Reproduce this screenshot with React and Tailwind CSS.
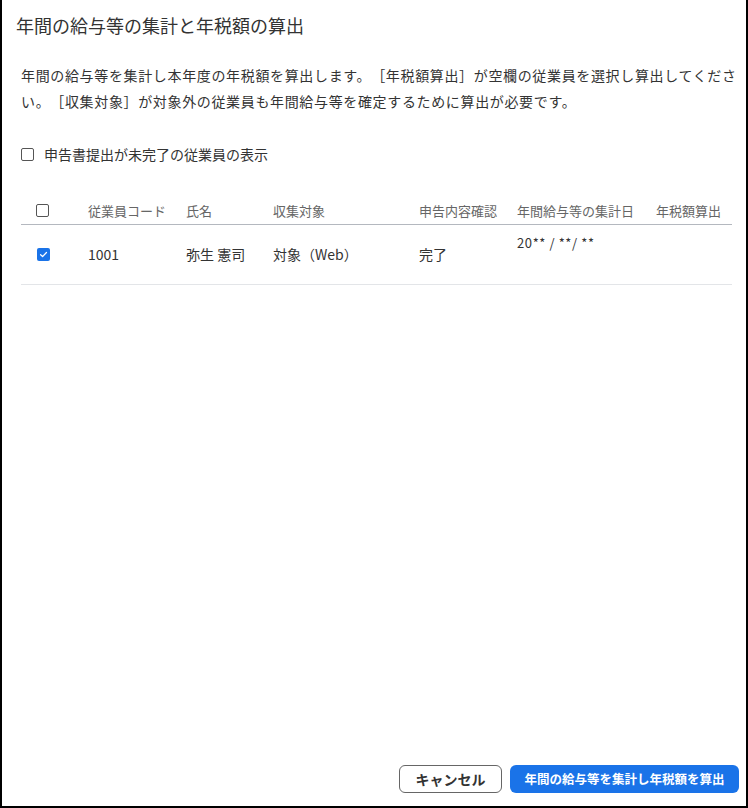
import React from "react";

const font = { fontFamily: '"Noto Sans CJK JP", "Noto Sans", sans-serif' };

function Box({ checked }) {
  if (checked) {
    return (
      <span className="flex h-[13px] w-[13px] items-center justify-center rounded-[2px] bg-[#1a73e8]">
        <svg width="9" height="9" viewBox="0 0 10 10" fill="none">
          <path d="M1.8 5.2 L4 7.3 L8.3 2.8" stroke="white" strokeWidth="1.4" strokeLinecap="round" strokeLinejoin="round" />
        </svg>
      </span>
    );
  }
  return <span className="block h-[13px] w-[13px] rounded-[2px] border border-[#555] bg-white" />;
}

export default function App() {
  return (
    <div
      className="flex h-[808px] w-[748px] flex-col border-x-2 border-b-2 border-black bg-white text-[#333] [text-spacing-trim:space-all]"
      style={font}
    >
      <div className="px-[14px] pt-[11px] text-[18px] leading-[28px]">年間の給与等の集計と年税額の算出</div>

      <p className="mt-[23px] pl-[19px] pr-[8px] text-[14px] leading-[26px] tracking-[0.65px]">
        年間の給与等を集計し本年度の年税額を算出します。［年税額算出］が空欄の従業員を選択し算出してくださ
        <br />
        い。［収集対象］が対象外の従業員も年間給与等を確定するために算出が必要です。
      </p>

      <label className="mt-[30px] flex h-[20px] items-center gap-[10px] pl-[19px] text-[14px]">
        <Box />
        <span>申告書提出が未完了の従業員の表示</span>
      </label>

      <div className="ml-[19px] mr-[14px] mt-[33px]">
        <div className="grid h-[28px] grid-cols-[67px_98px_87px_146px_98px_139px_1fr] items-center border-b border-[#b4b8bf] text-[13px] text-[#666]">
          <div className="pl-[15px]">
            <Box />
          </div>
          <div>従業員コード</div>
          <div>氏名</div>
          <div>収集対象</div>
          <div>申告内容確認</div>
          <div>年間給与等の集計日</div>
          <div>年税額算出</div>
        </div>
        <div className="grid h-[60px] grid-cols-[67px_98px_87px_146px_98px_139px_1fr] items-center border-b border-[#e3e5e8] text-[14px]">
          <div className="pl-[16px]">
            <Box checked />
          </div>
          <div>1001</div>
          <div>弥生 憲司</div>
          <div>対象（Web）</div>
          <div>完了</div>
          <div className="self-start pt-[10px] text-[13px] leading-[16px] tracking-[0.6px]">20** / **/ **</div>
          <div />
        </div>
      </div>

      <div className="mt-auto flex justify-end gap-[8px] pb-[13px] pr-[7px]">
        <button className="h-[28px] w-[103px] rounded-[6px] border border-[#666] bg-white text-[14px] font-bold text-[#333]">
          キャンセル
        </button>
        <button className="h-[28px] w-[229px] rounded-[6px] bg-[#1a73e8] text-[12.5px] font-bold text-white">
          年間の給与等を集計し年税額を算出
        </button>
      </div>
    </div>
  );
}
